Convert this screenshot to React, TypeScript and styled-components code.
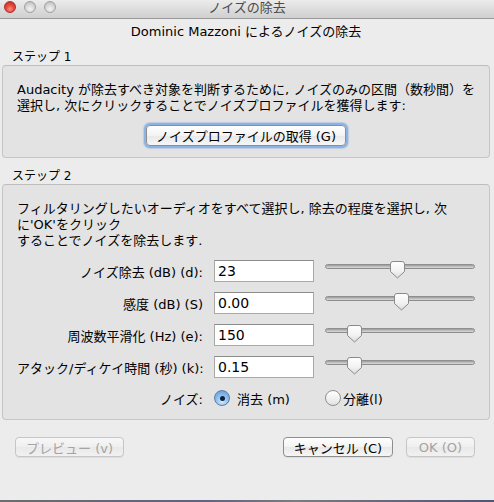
import styled, { createGlobalStyle } from 'styled-components';

const GlobalStyle = createGlobalStyle`
  html, body {
    margin: 0;
    padding: 0;
    background: #ececec;
  }
  body {
    font-family: "DejaVu Sans", "Noto Sans CJK JP", sans-serif;
    font-size: 13px;
    color: #000;
  }
`;

interface SliderRow {
  label: string;
  value: string;
  pos: number;
}

const rows: SliderRow[] = [
  { label: 'ノイズ除去 (dB) (d):', value: '23', pos: 0.48 },
  { label: '感度 (dB) (S)', value: '0.00', pos: 0.51 },
  { label: '周波数平滑化 (Hz) (e):', value: '150', pos: 0.16 },
  { label: 'アタック/ディケイ時間 (秒) (k):', value: '0.15', pos: 0.16 },
];

const Thumb = () => (
  <svg width="17" height="18" viewBox="0 0 17 18">
    <defs>
      <linearGradient id="thumbFill" x1="0" y1="0" x2="0" y2="1">
        <stop offset="0" stopColor="#ffffff" />
        <stop offset="0.6" stopColor="#f1f1f1" />
        <stop offset="1" stopColor="#dcdcdc" />
      </linearGradient>
    </defs>
    <path
      d="M1.5 3 Q1.5 0.5 4 0.5 H13 Q15.5 0.5 15.5 3 V10.5 L8.5 17 L1.5 10.5 Z"
      fill="url(#thumbFill)"
      stroke="#8a8a8a"
      strokeWidth="1"
    />
  </svg>
);

const App = () => {
  return (
    <>
      <GlobalStyle />
      <Window>
        <TitleBar>
          <Lights>
            <Light $kind="close" />
            <Light $kind="idle" />
            <Light $kind="idle" />
          </Lights>
          <Title>ノイズの除去</Title>
        </TitleBar>
        <Body>
          <Heading>Dominic Mazzoni によるノイズの除去</Heading>

          <GroupLabel>ステップ 1</GroupLabel>
          <GroupBox>
            <Para>
              Audacity が除去すべき対象を判断するために, ノイズのみの区間（数秒間）を
              <br />
              選択し, 次にクリックすることでノイズプロファイルを獲得します:
            </Para>
            <Center>
              <PushButton $focused $width={200}>
                ノイズプロファイルの取得 (G)
              </PushButton>
            </Center>
          </GroupBox>

          <GroupLabel $second>ステップ 2</GroupLabel>
          <GroupBox>
            <Para>
              フィルタリングしたいオーディオをすべて選択し, 除去の程度を選択し, 次
              <br />
              に'OK'をクリック
              <br />
              することでノイズを除去します.
            </Para>
            <Form>
              {rows.map((r) => (
                <Row key={r.label}>
                  <FieldLabel>{r.label}</FieldLabel>
                  <TextField readOnly value={r.value} />
                  <Slider>
                    <Track />
                    <ThumbWrap style={{ left: `${r.pos * 133}px` }}>
                      <Thumb />
                    </ThumbWrap>
                  </Slider>
                </Row>
              ))}
              <RadioRow>
                <FieldLabel>ノイズ:</FieldLabel>
                <RadioOption>
                  <Radio $checked />
                  <span>消去 (m)</span>
                </RadioOption>
                <RadioOption $tight>
                  <Radio />
                  <span>分離(l)</span>
                </RadioOption>
              </RadioRow>
            </Form>
          </GroupBox>

          <Footer>
            <PushButton $disabled $width={109}>
              プレビュー (v)
            </PushButton>
            <RightButtons>
              <PushButton $width={110}>キャンセル (C)</PushButton>
              <PushButton $disabled $width={69}>
                OK (O)
              </PushButton>
            </RightButtons>
          </Footer>
        </Body>
        <Behind />
      </Window>
    </>
  );
};

export default App;

const Window = styled.div`
  width: 494px;
  height: 502px;
  display: flex;
  flex-direction: column;
  background: #ececec;
  overflow: hidden;
`;

const TitleBar = styled.div`
  position: relative;
  height: 18px;
  flex-shrink: 0;
  display: flex;
  align-items: flex-start;
  justify-content: center;
  background: linear-gradient(#ececec, #dadada 60%, #d0d0d0);
  border-bottom: 1px solid #9a9a9a;
`;

const Lights = styled.div`
  position: absolute;
  left: 4px;
  top: 1px;
  display: flex;
  gap: 8px;
`;

const Light = styled.div<{ $kind: 'close' | 'idle' }>`
  width: 12px;
  height: 12px;
  border-radius: 50%;
  box-sizing: border-box;
  border: 1px solid ${({ $kind }) => ($kind === 'close' ? '#a8302b' : '#a0a0a0')};
  background: ${({ $kind }) =>
    $kind === 'close'
      ? 'radial-gradient(circle at 50% 70%, #ff8a7e 0%, #e8473c 45%, #b92c24 100%)'
      : 'radial-gradient(circle at 50% 70%, #f4f4f4 0%, #d6d6d6 50%, #b5b5b5 100%)'};
`;

const Title = styled.div`
  font-size: 13px;
  line-height: 15px;
  color: #4a4a4a;
`;

const Body = styled.div`
  height: 481px;
  display: flex;
  flex-direction: column;
  padding: 0 4px 0 2px;
`;

const Heading = styled.div`
  padding-top: 5px;
  text-align: center;
  line-height: 16px;
`;

const GroupLabel = styled.div<{ $second?: boolean }>`
  margin-top: ${({ $second }) => ($second ? '10px' : '9px')};
  padding-left: 10px;
  font-size: 12px;
  line-height: 16px;
`;

const GroupBox = styled.div`
  padding: 16px 14px 11px 14px;
  border: 1px solid #c6c6c6;
  border-top-color: #bdbdbd;
  border-radius: 4px;
  background: #e3e3e3;
`;

const Para = styled.div`
  line-height: 16px;
  white-space: nowrap;
`;

const Center = styled.div`
  margin-top: 11px;
  display: flex;
  justify-content: center;
`;

const PushButton = styled.div<{ $focused?: boolean; $disabled?: boolean; $width: number }>`
  box-sizing: border-box;
  width: ${({ $width }) => $width}px;
  height: ${({ $focused }) => ($focused ? '21px' : '20px')};
  display: flex;
  align-items: center;
  justify-content: center;
  border-radius: 4px;
  font-size: 13px;
  color: ${({ $disabled }) => ($disabled ? '#a3a3a3' : '#000')};
  border: 1px solid ${({ $disabled }) => ($disabled ? '#c6c6c6' : '#8e8e8e')};
  background: ${({ $disabled }) =>
    $disabled
      ? 'linear-gradient(#f7f7f7, #efefef 50%, #e9e9e9 51%, #f1f1f1)'
      : 'linear-gradient(#ffffff, #f3f3f3 50%, #e8e8e8 51%, #f6f6f6)'};
  box-shadow: ${({ $focused }) =>
    $focused ? '0 0 0 2px #8bb3e4, 0 0 1px 3px rgba(120, 160, 220, 0.35)' : '0 1px 0 rgba(0,0,0,0.06)'};
`;

const Form = styled.div`
  margin-top: 11px;
  display: flex;
  flex-direction: column;
  gap: 10px;
`;

const Row = styled.div`
  display: grid;
  grid-template-columns: 186px 100px 150px;
  column-gap: 11px;
  align-items: center;
  height: 22px;
`;

const RadioRow = styled(Row)`
  height: 20px;
`;

const FieldLabel = styled.div`
  text-align: right;
  white-space: nowrap;
`;

const TextField = styled.input`
  box-sizing: border-box;
  width: 100px;
  height: 22px;
  margin: 0;
  padding: 0 3px;
  border: 1px solid #a9a9a9;
  border-top-color: #8c8c8c;
  border-radius: 0;
  background: #fff;
  font-family: "DejaVu Sans", "Noto Sans CJK JP", sans-serif;
  font-size: 14px;
  color: #000;
  outline: none;
`;

const Slider = styled.div`
  position: relative;
  width: 150px;
  height: 22px;
`;

const Track = styled.div`
  position: absolute;
  left: 0;
  right: 0;
  top: 4px;
  height: 5px;
  border-radius: 3px;
  border: 1px solid #8d8d8d;
  box-sizing: border-box;
  background: linear-gradient(#9b9b9b, #c4c4c4 60%, #d8d8d8);
`;

const ThumbWrap = styled.div`
  position: absolute;
  top: 1px;
  width: 17px;
  height: 18px;
  line-height: 0;
`;

const RadioOption = styled.div<{ $tight?: boolean }>`
  display: flex;
  align-items: center;
  gap: ${({ $tight }) => ($tight ? '2px' : '7px')};
  white-space: nowrap;
`;

const Radio = styled.div<{ $checked?: boolean }>`
  position: relative;
  box-sizing: border-box;
  width: 16px;
  height: 16px;
  border-radius: 50%;
  border: 1px solid ${({ $checked }) => ($checked ? '#5b7ea6' : '#8f8f8f')};
  background: ${({ $checked }) =>
    $checked
      ? 'radial-gradient(circle at 50% 75%, #d7ebfd 0%, #8fbff0 45%, #5d95d6 100%)'
      : 'linear-gradient(#ffffff, #f2f2f2 50%, #e2e2e2)'};

  &::after {
    content: '';
    display: ${({ $checked }) => ($checked ? 'block' : 'none')};
    position: absolute;
    left: 50%;
    top: 50%;
    width: 5px;
    height: 5px;
    margin: -2.5px 0 0 -2.5px;
    border-radius: 50%;
    background: #11213a;
  }
`;

const Footer = styled.div`
  margin-top: 17px;
  padding-left: 13px;
  display: flex;
  justify-content: space-between;
  padding-right: 15px;
`;

const RightButtons = styled.div`
  display: flex;
  gap: 13px;
`;

const Behind = styled.div`
  height: 2px;
  flex-shrink: 0;
  background: linear-gradient(90deg, #6d6d6d, #5e6380 40%, #7a7a80 60%, #4f5575);
`;
